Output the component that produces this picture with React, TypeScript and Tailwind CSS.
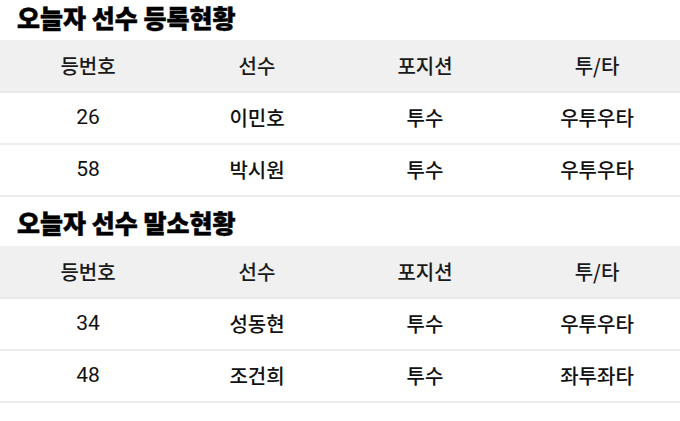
const registered = [
  { no: '26', name: '이민호', pos: '투수', hand: '우투우타' },
  { no: '58', name: '박시원', pos: '투수', hand: '우투우타' },
]

const released = [
  { no: '34', name: '성동현', pos: '투수', hand: '우투우타' },
  { no: '48', name: '조건희', pos: '투수', hand: '좌투좌타' },
]

type Player = { no: string; name: string; pos: string; hand: string }

function RosterTable({ rows }: { rows: Player[] }) {
  return (
    <div>
      {/* Header */}
      <div className="grid grid-cols-4 h-[53px] items-center bg-[#f0f0f0] border-b-2 border-[#e8e8e8] text-[20px] font-medium text-[#1a1a1a]">
        <div className="text-center pl-[6px]">등번호</div>
        <div className="text-center pl-[4px]">선수</div>
        <div className="text-center">포지션</div>
        <div className="text-center pl-[4px]">투/타</div>
      </div>
      {rows.map((p) => (
        <div
          key={p.no}
          className="grid grid-cols-4 h-[52px] items-center border-b-2 border-[#ececec] text-[20px] font-medium text-[#111]"
        >
          <div className="text-center pl-[6px] text-[21px] font-normal font-[Roboto,sans-serif]">{p.no}</div>
          <div className="text-center pl-[4px]">{p.name}</div>
          <div className="text-center">{p.pos}</div>
          <div className="text-center pl-[4px]">{p.hand}</div>
        </div>
      ))}
    </div>
  )
}

export default function App() {
  return (
    <div
      className="w-[680px] h-[421px] bg-white overflow-hidden"
      style={{ fontFamily: '"Noto Sans CJK KR", "Noto Sans", sans-serif' }}
    >
      <h2 className="h-[40px] px-[17px] pt-[2px] leading-[30px] text-[25px] font-black text-black [-webkit-text-stroke:0.5px_black]">
        오늘자 선수 등록현황
      </h2>
      <RosterTable rows={registered} />
      <h2 className="h-[49px] pt-[10px] px-[17px] leading-[30px] text-[25px] font-black text-black [-webkit-text-stroke:0.5px_black]">
        오늘자 선수 말소현황
      </h2>
      <RosterTable rows={released} />
    </div>
  )
}
